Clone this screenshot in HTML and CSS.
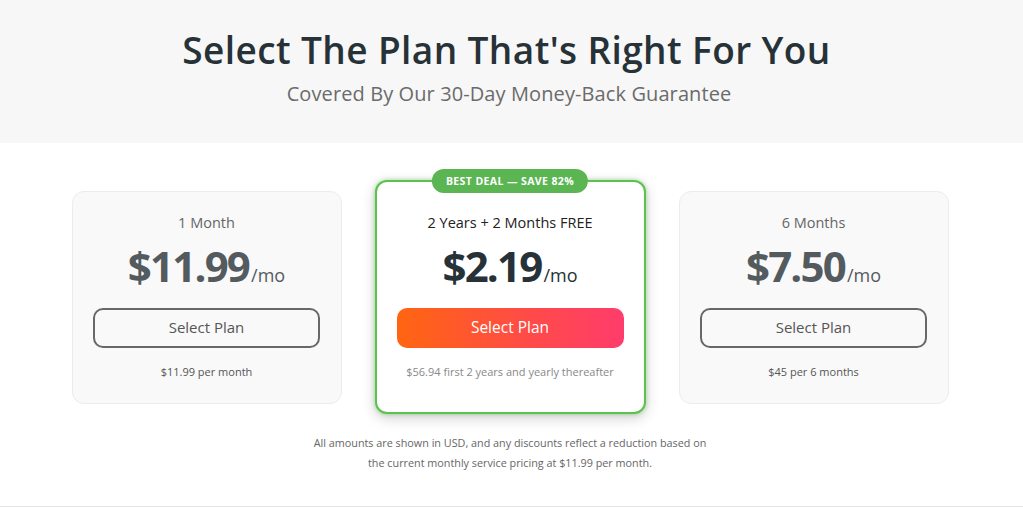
FILE: index.html
```html
<!DOCTYPE html>
<html>
<head>
<meta charset="utf-8">
<link rel="stylesheet" href="styles.css">
</head>
<body>
<header class="hero">
  <h1 class="hero-title">Select The Plan That's Right For You</h1>
  <p class="hero-sub">Covered By Our 30-Day Money-Back Guarantee</p>
</header>
<main class="pricing">
  <div class="plans">
    <div class="plan">
      <div class="plan-name">1 Month</div>
      <div class="plan-price"><span class="amount">$11.99</span><span class="per">/mo</span></div>
      <button class="btn btn-outline">Select Plan</button>
      <div class="plan-note">$11.99 per month</div>
    </div>
    <div class="plan plan-featured">
      <div class="badge">BEST DEAL — SAVE 82%</div>
      <div class="plan-name">2 Years + 2 Months FREE</div>
      <div class="plan-price"><span class="amount">$2.19</span><span class="per">/mo</span></div>
      <button class="btn btn-primary">Select Plan</button>
      <div class="plan-note">$56.94 first 2 years and yearly thereafter</div>
    </div>
    <div class="plan">
      <div class="plan-name">6 Months</div>
      <div class="plan-price"><span class="amount">$7.50</span><span class="per">/mo</span></div>
      <button class="btn btn-outline">Select Plan</button>
      <div class="plan-note">$45 per 6 months</div>
    </div>
  </div>
  <p class="disclaimer">All amounts are shown in USD, and any discounts reflect a reduction based on<br>the current monthly service pricing at $11.99 per month.</p>
</main>
</body>
</html>
```

FILE: styles.css
```css
* { box-sizing: border-box; }
html, body { margin: 0; padding: 0; }
body {
  font-family: "Open Sans", "Noto Sans", sans-serif;
  background: #fff;
  color: #263238;
  width: 1023px;
  height: 507px;
  overflow: hidden;
}
.hero {
  background: #f7f7f7;
  height: 143px;
  text-align: center;
  padding: 27px 10px 0 0;
}
.hero-title {
  margin: 0;
  font-size: 37px;
  line-height: 46px;
  font-weight: 600;
  color: #263238;
  letter-spacing: 0.4px;
}
.hero-sub {
  margin: 8px 0 0 5px;
  font-size: 20px;
  line-height: 26px;
  color: #6b6b6b;
  letter-spacing: 0.1px;
}
.pricing {
  border-bottom: 1px solid #e5e5e5;
  height: 364px;
  padding-right: 3px;
}
.plans {
  display: flex;
  justify-content: center;
  align-items: center;
  gap: 33px;
  padding-top: 37px;
}
.plan {
  position: relative;
  width: 270px;
  height: 213px;
  background: #f9f9f9;
  border: 1px solid #ececec;
  border-radius: 12px;
  display: flex;
  flex-direction: column;
  align-items: center;
  padding: 20px 20px 0;
}
.plan-featured {
  width: 271px;
  height: 234px;
  background: #fff;
  border: 2px solid #5cc24e;
  box-shadow: 0 4px 14px rgba(0,0,0,0.18), 0 0 4px rgba(92,194,78,0.5);
  padding-top: 30px;
}
.badge {
  position: absolute;
  top: -13px;
  left: 50%;
  transform: translateX(-50%);
  background: #5ab552;
  color: #fff;
  font-size: 10.5px;
  font-weight: 700;
  letter-spacing: 0.4px;
  line-height: 24px;
  height: 24px;
  padding: 0 14px;
  border-radius: 12px;
  white-space: nowrap;
}
.plan-name {
  font-size: 14.5px;
  line-height: 22px;
  color: #666;
}
.plan-featured .plan-name { color: #222; }
.plan-price {
  margin-top: 6px;
  display: flex;
  align-items: baseline;
  height: 52px;
  color: #545b5f;
}
.plan-featured .plan-price { color: #263238; }
.amount {
  font-size: 42px;
  font-weight: 700;
  line-height: 52px;
  letter-spacing: -1.8px;
}
.per {
  font-size: 18px;
  margin-left: 2px;
}
.btn {
  margin-top: 16px;
  width: 227px;
  height: 40px;
  border-radius: 10px;
  font-family: inherit;
  font-size: 15px;
  line-height: 20px;
  padding: 0 0 2px;
  cursor: pointer;
}
.btn-outline {
  background: transparent;
  border: 2px solid #686868;
  color: #555;
}
.btn-primary {
  border: none;
  color: #fff;
  font-size: 15.5px;
  background: linear-gradient(90deg, #ff6511 0%, #ff4a4a 60%, #ff3c6c 100%);
}
.plan-note {
  margin-top: 16px;
  font-size: 11px;
  line-height: 16px;
  color: #555;
}
.plan-featured .plan-note { color: #888; }
.disclaimer {
  margin: 19px 0 0;
  text-align: center;
  font-size: 10.8px;
  line-height: 20px;
  color: #666;
}
```
